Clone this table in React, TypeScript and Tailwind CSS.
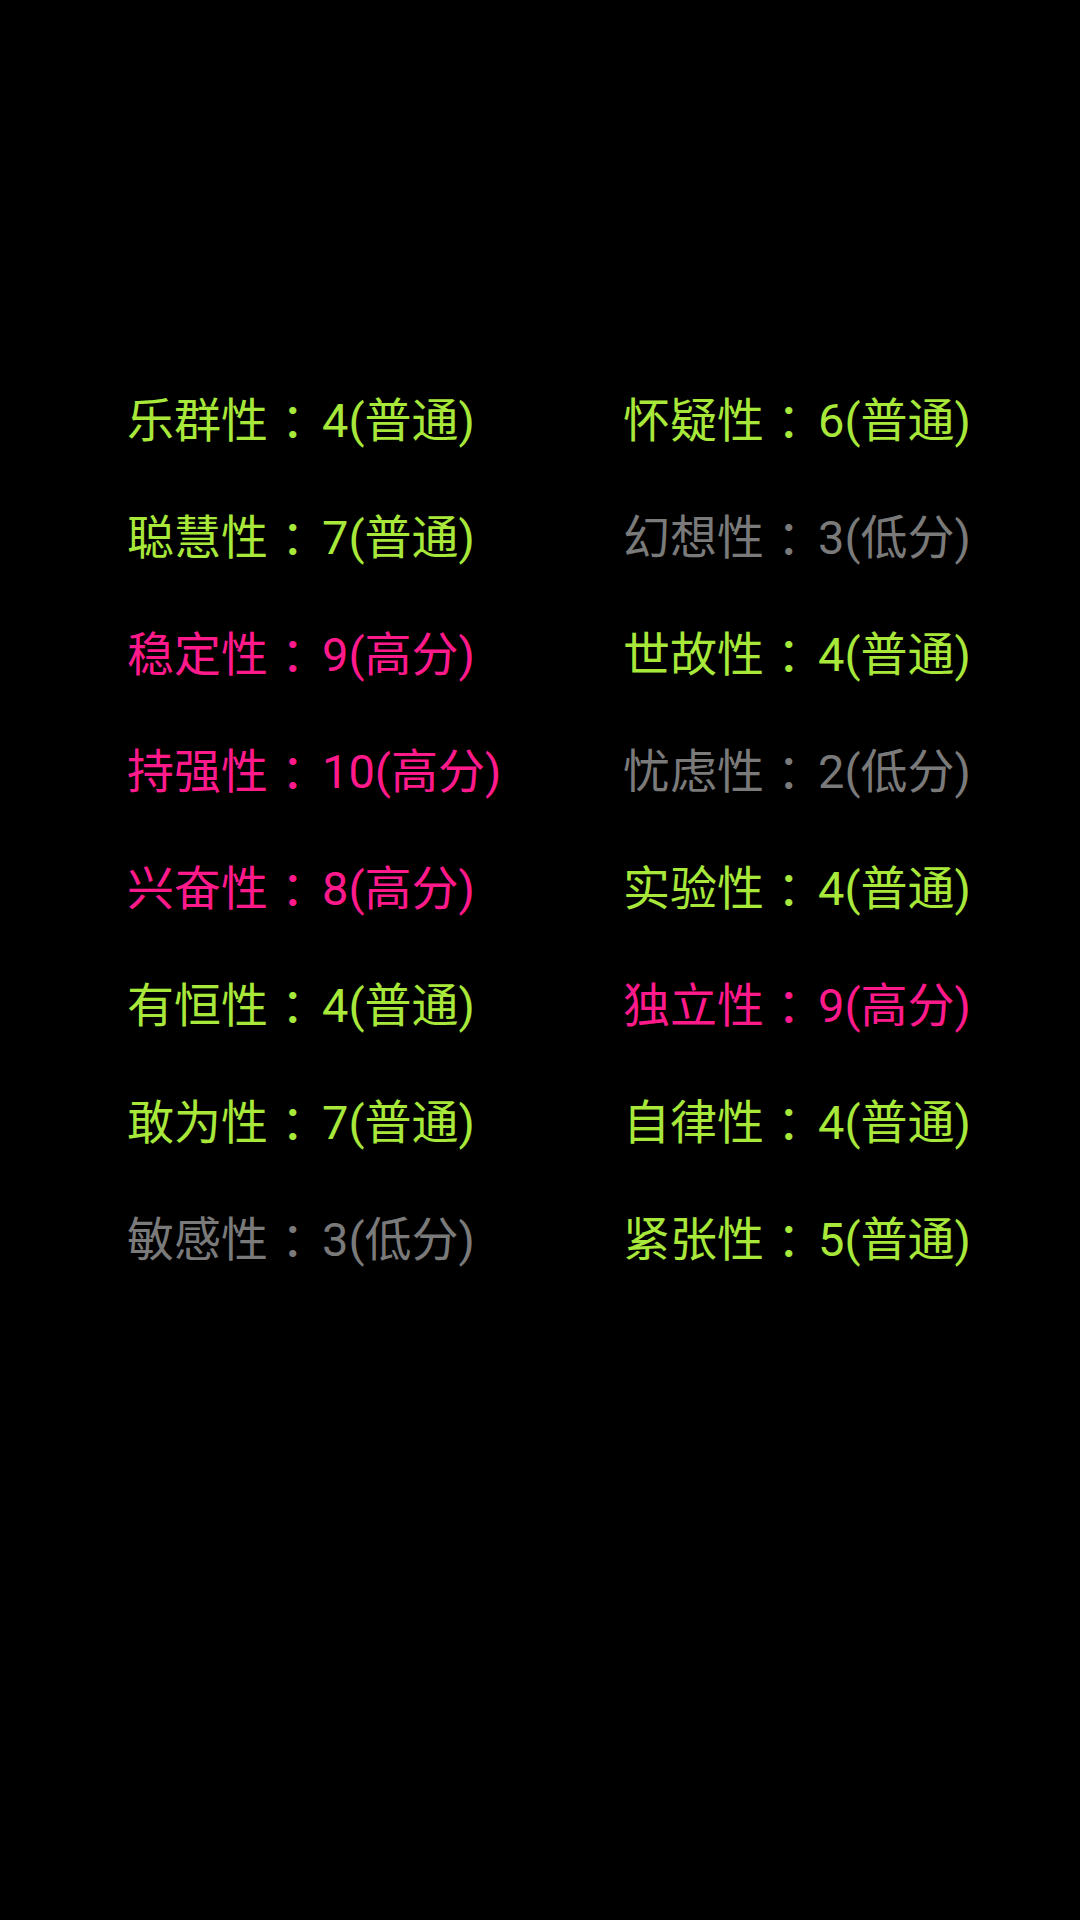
import React from 'react';

type Level = 'high' | 'mid' | 'low';

const rows: { name: string; score: number; level: Level }[][] = [
  [{ name: '乐群性', score: 4, level: 'mid' }, { name: '怀疑性', score: 6, level: 'mid' }],
  [{ name: '聪慧性', score: 7, level: 'mid' }, { name: '幻想性', score: 3, level: 'low' }],
  [{ name: '稳定性', score: 9, level: 'high' }, { name: '世故性', score: 4, level: 'mid' }],
  [{ name: '持强性', score: 10, level: 'high' }, { name: '忧虑性', score: 2, level: 'low' }],
  [{ name: '兴奋性', score: 8, level: 'high' }, { name: '实验性', score: 4, level: 'mid' }],
  [{ name: '有恒性', score: 4, level: 'mid' }, { name: '独立性', score: 9, level: 'high' }],
  [{ name: '敢为性', score: 7, level: 'mid' }, { name: '自律性', score: 4, level: 'mid' }],
  [{ name: '敏感性', score: 3, level: 'low' }, { name: '紧张性', score: 5, level: 'mid' }],
];

const levelText: Record<Level, string> = { high: '高分', mid: '普通', low: '低分' };
const levelColor: Record<Level, string> = {
  high: 'text-[#ff1a8c]',
  mid: 'text-[#a8e83a]',
  low: 'text-[#7a7a7a]',
};

export default function App() {
  return (
    <div className="w-[1080px] h-[1920px] bg-black pt-[362px] pl-[127px] font-['Roboto','Noto_Sans_CJK_SC',sans-serif]">
      <div className="grid grid-cols-[496px_1fr]">
        {rows.flat().map((item, i) => (
          <div key={i} className={`text-[47px] leading-[117px] whitespace-nowrap ${levelColor[item.level]}`}>
            {item.name}
            {/* colon sits mid-cell in the original font */}
            <span className="pl-[13px] tracking-[-6px]">：</span>
            {item.score}({levelText[item.level]})
          </div>
        ))}
      </div>
    </div>
  );
}
